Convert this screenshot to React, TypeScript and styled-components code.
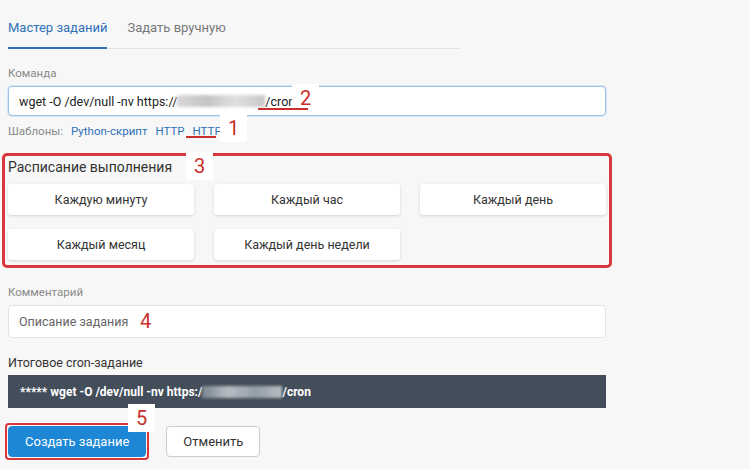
import React from 'react';
import styled, { createGlobalStyle } from 'styled-components';

const Global = createGlobalStyle`
  html, body { margin: 0; background: #f7f7f7; }
  body { font-family: Roboto, "Noto Sans", sans-serif; color: #333; }
`;

const Page = styled.div`
  position: relative;
  width: 750px;
  height: 469px;
  overflow: hidden;
  padding: 0 8px;
  box-sizing: border-box;
  background: #f7f7f7;
`;

const Content = styled.div`
  width: 598px;
  display: flex;
  flex-direction: column;
`;

const Tabs = styled.div`
  display: flex;
  width: 452px;
  border-bottom: 1px solid #e3e3e3;
  margin-top: 20px;
  gap: 20px;
`;

const Tab = styled.div<{ $active?: boolean }>`
  font-size: 13px;
  padding-bottom: 12px;
  color: ${({ $active }) => ($active ? '#2f72b8' : '#777')};
  border-bottom: 2px solid ${({ $active }) => ($active ? '#2f72b8' : 'transparent')};
  margin-bottom: -1px;
`;

const Label = styled.div<{ $dark?: boolean }>`
  font-size: ${({ $dark }) => ($dark ? '12.5px' : '11.5px')};
  color: ${({ $dark }) => ($dark ? '#333' : '#8a8a8a')};
  margin-top: 17px;
  margin-bottom: 6px;
`;

const Field = styled.div<{ $focus?: boolean }>`
  height: 30px;
  box-sizing: border-box;
  background: #fff;
  border: 1px solid ${({ $focus }) => ($focus ? '#9fc1e4' : '#e2e2e2')};
  box-shadow: ${({ $focus }) => ($focus ? '0 0 0 1px #d6e6f5' : 'none')};
  border-radius: 4px;
  display: flex;
  align-items: center;
  padding: 0 10px;
  font-size: 12.5px;
  color: #222;
  white-space: nowrap;
`;

const Placeholder = styled.span`
  color: #666;
`;

const Blur = styled.span<{ $w: number; $dark?: boolean }>`
  display: inline-block;
  width: ${({ $w }) => $w}px;
  height: 12px;
  background: ${({ $dark }) =>
    $dark
      ? 'linear-gradient(90deg, #7a8590, #b7bdc3, #959ea6, #b7bdc3)'
      : 'linear-gradient(90deg, #d8d8d8, #c4c4c4, #e0e0e0, #c8c8c8)'};
  filter: blur(1.5px);
`;

const Templates = styled.div`
  display: flex;
  gap: 8px;
  font-size: 11.5px;
  margin-top: 8px;
  color: #8a8a8a;
  a { color: #2f72b8; text-decoration: none; }
`;

const Schedule = styled.div`
  margin: 15px -6px 0;
  border: 3px solid #d9373b;
  border-radius: 5px;
  padding: 3px 12px 5px 3px;
`;

const Title = styled.div`
  font-size: 14px;
  color: #333;
  margin-bottom: 9px;
`;

const Grid = styled.div`
  display: grid;
  grid-template-columns: repeat(3, 186px);
  column-gap: 20px;
  row-gap: 14px;
`;

const Chip = styled.div`
  height: 31px;
  background: #fff;
  border-radius: 3px;
  box-shadow: 0 1px 3px rgba(0,0,0,0.15);
  display: flex;
  align-items: center;
  justify-content: center;
  font-size: 12.5px;
  color: #333;
`;

const Cron = styled.div`
  height: 33px;
  background: #434e5a;
  color: #fff;
  font-weight: 700;
  font-size: 12px;
  display: flex;
  align-items: center;
  padding: 0 12px;
  margin-top: -1px;
  white-space: nowrap;
`;

const Actions = styled.div`
  display: flex;
  gap: 20px;
  margin-top: 18px;
`;

const Button = styled.div<{ $primary?: boolean }>`
  height: 31px;
  box-sizing: border-box;
  padding: 0 16px;
  display: flex;
  align-items: center;
  font-size: 13px;
  border-radius: 4px;
  background: ${({ $primary }) => ($primary ? '#1d87d6' : '#fff')};
  color: ${({ $primary }) => ($primary ? '#fff' : '#333')};
  border: 1px solid ${({ $primary }) => ($primary ? '#1d87d6' : '#ccc')};
  position: relative;
`;

const RedFrame = styled.div`
  position: absolute;
  inset: -4px;
  border: 2px solid #d9373b;
  border-radius: 4px;
`;

const Mark = styled.div<{ $x: number; $y: number }>`
  position: absolute;
  left: ${({ $x }) => $x}px;
  top: ${({ $y }) => $y}px;
  background: #fff;
  color: #c9302c;
  font-size: 20px;
  padding: 2px 8px;
`;

const Underline = styled.div<{ $x: number; $y: number; $w: number }>`
  position: absolute;
  left: ${({ $x }) => $x}px;
  top: ${({ $y }) => $y}px;
  width: ${({ $w }) => $w}px;
  height: 2px;
  background: #c9302c;
`;

export default function App() {
  return (
    <Page>
      <Global />
      <Content>
        <Tabs>
          <Tab $active>Мастер заданий</Tab>
          <Tab>Задать вручную</Tab>
        </Tabs>
        <Label>Команда</Label>
        <Field $focus>
          wget -O /dev/null -nv https://<Blur $w={88} />/cron
        </Field>
        <Templates>
          <span>Шаблоны:</span>
          <a>Python-скрипт</a>
          <a>HTTP</a>
          <a>HTTP</a>
        </Templates>
        <Schedule>
          <Title>Расписание выполнения</Title>
          <Grid>
            <Chip>Каждую минуту</Chip>
            <Chip>Каждый час</Chip>
            <Chip>Каждый день</Chip>
            <Chip>Каждый месяц</Chip>
            <Chip>Каждый день недели</Chip>
          </Grid>
        </Schedule>
        <Label>Комментарий</Label>
        <Field style={{ height: 33 }}>
          <Placeholder>Описание задания</Placeholder>
        </Field>
        <Label $dark>Итоговое cron-задание</Label>
        <Cron>
          *****&nbsp;wget -O /dev/null -nv https:/<Blur $w={80} $dark />/cron
        </Cron>
        <Actions>
          <Button $primary>
            Создать задание
            <RedFrame />
          </Button>
          <Button>Отменить</Button>
        </Actions>
      </Content>
      <Mark $x={292} $y={84}>2</Mark>
      <Underline $x={258} $y={108} $w={50} />
      <Mark $x={220} $y={114}>1</Mark>
      <Underline $x={186} $y={136} $w={30} />
      <Mark $x={186} $y={152}>3</Mark>
      <Mark $x={132} $y={307}>4</Mark>
      <Mark $x={128} $y={404}>5</Mark>
    </Page>
  );
}
